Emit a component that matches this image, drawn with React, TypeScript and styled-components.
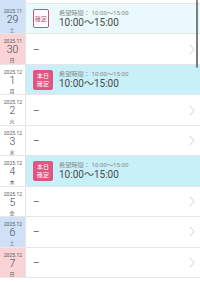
import React from "react";
import styled, { createGlobalStyle } from "styled-components";

const Global = createGlobalStyle`
  html, body { margin: 0; padding: 0; background: #fff; overflow: hidden; }
  body { font-family: "Roboto", "Noto Sans CJK JP", sans-serif; }
`;

type Tone = "sat" | "sun" | "plain";
type Status = "none" | "fixed" | "today";

const toneBg: Record<Tone, string> = {
  sat: "#cfe0f7",
  sun: "#f9d3d6",
  plain: "#ffffff",
};

const statusBg: Record<Status, string> = {
  none: "#ffffff",
  fixed: "#e9f9fc",
  today: "#c8f0f9",
};

const Viewport = styled.div`
  position: relative;
  width: 200px;
  height: 282px;
  overflow: hidden;
`;

const List = styled.div`
  display: flex;
  flex-direction: column;
`;

const Row = styled.div<{ $h: number }>`
  display: grid;
  grid-template-columns: 26px 1fr;
  height: ${({ $h }) => $h}px;
  flex: none;
`;

const DateCell = styled.div<{ $tone: Tone; $edge?: boolean }>`
  box-sizing: border-box;
  background: ${({ $tone }) => toneBg[$tone]};
  border-right: 1px solid #e4e4e4;
  border-bottom: ${({ $edge }) => ($edge ? "none" : "1px solid #e8e8e8")};
  display: flex;
  flex-direction: column;
  align-items: center;
  padding-top: 3px;
  color: #5a5a5a;
  overflow: hidden;
`;

// under 6px the browser clamps the size, so shrink by transform instead
const Year = styled.div`
  font-size: 6px;
  line-height: 7px;
  white-space: nowrap;
  transform: scale(0.84);
`;

const Day = styled.div`
  font-size: 10.5px;
  line-height: 12px;
  font-weight: 300;
  color: #444;
`;

const Week = styled.div`
  font-family: "Noto Sans CJK JP", sans-serif;
  font-size: 6px;
  line-height: 7px;
  transform: scale(0.85);
`;

const Body = styled.div<{ $status: Status }>`
  box-sizing: border-box;
  background: ${({ $status }) => statusBg[$status]};
  border-bottom: 1px solid #e6e6e6;
  display: flex;
  align-items: center;
  padding-left: 7px;
  padding-right: 5px;
  gap: 6px;
`;

const BadgeSlot = styled.div`
  width: 20px;
  flex: none;
  display: flex;
`;

const Badge = styled.div<{ $solid?: boolean }>`
  box-sizing: border-box;
  width: ${({ $solid }) => ($solid ? 20 : 16)}px;
  height: ${({ $solid }) => ($solid ? 20 : 19)}px;
  border-radius: 2px;
  border: 1px solid ${({ $solid }) => ($solid ? "#e05683" : "#c4557a")};
  background: ${({ $solid }) => ($solid ? "#e05683" : "#ffffff")};
  color: ${({ $solid }) => ($solid ? "#ffffff" : "#b8486e")};
  display: flex;
  flex-direction: column;
  justify-content: center;
  align-items: center;
  overflow: hidden;
  font-family: "Noto Sans CJK JP", sans-serif;
  font-size: 6px;
  line-height: 7.5px;
  white-space: nowrap;
`;

const Times = styled.div`
  display: flex;
  flex-direction: column;
  padding-top: 1px;
`;

const Wish = styled.div`
  font-size: 6.2px;
  line-height: 8px;
  color: #8a8a8a;
  white-space: nowrap;
`;

const Slot = styled.div`
  font-size: 10px;
  line-height: 12px;
  color: #4a4a4a;
  white-space: nowrap;
`;

const Dash = styled.div`
  font-size: 10px;
  color: #666;
  flex: 1;
`;

const Chevron = styled.svg`
  width: 6px;
  height: 11px;
  flex: none;
`;

const Thumb = styled.div`
  position: absolute;
  right: 2px;
  top: 0;
  width: 2px;
  height: 68px;
  border-radius: 1px;
  background: #7d7d7d;
`;

type Entry = {
  year: string;
  day: number;
  week: string;
  tone: Tone;
  status: Status;
};

const entries: Entry[] = [
  { year: "2025.11", day: 29, week: "土", tone: "sat", status: "fixed" },
  { year: "2025.11", day: 30, week: "日", tone: "sun", status: "none" },
  { year: "2025.12", day: 1, week: "月", tone: "plain", status: "today" },
  { year: "2025.12", day: 2, week: "火", tone: "plain", status: "none" },
  { year: "2025.12", day: 3, week: "水", tone: "plain", status: "none" },
  { year: "2025.12", day: 4, week: "木", tone: "plain", status: "today" },
  { year: "2025.12", day: 5, week: "金", tone: "plain", status: "none" },
  { year: "2025.12", day: 6, week: "土", tone: "sat", status: "none" },
  { year: "2025.12", day: 7, week: "日", tone: "sun", status: "none" },
];

const ROW_H = 30.44;

const DayRow = ({ e }: { e: Entry }) => (
  <Row $h={ROW_H}>
    <DateCell $tone={e.tone}>
      <Year>{e.year}</Year>
      <Day>{e.day}</Day>
      <Week>{e.week}</Week>
    </DateCell>
    <Body $status={e.status}>
      {e.status === "none" ? (
        <>
          <Dash>–</Dash>
          <Chevron viewBox="0 0 6 11">
            <polyline points="1,1 5,5.5 1,10" fill="none" stroke="#cfcfcf" strokeWidth="1" />
          </Chevron>
        </>
      ) : (
        <>
          <BadgeSlot>
            {e.status === "today" ? (
              <Badge $solid>
                <span>本日</span>
                <span>確定</span>
              </Badge>
            ) : (
              <Badge>確定</Badge>
            )}
          </BadgeSlot>
          <Times>
            <Wish>希望時間： 10:00〜15:00</Wish>
            <Slot>10:00〜15:00</Slot>
          </Times>
        </>
      )}
    </Body>
  </Row>
);

export default function App() {
  return (
    <Viewport>
      <Global />
      <List>
        <Row $h={4}>
          <DateCell $tone="sat" $edge />
          <Body $status="none" />
        </Row>
        {entries.map((e) => (
          <DayRow key={e.year + e.day} e={e} />
        ))}
      </List>
      <Thumb />
    </Viewport>
  );
}
